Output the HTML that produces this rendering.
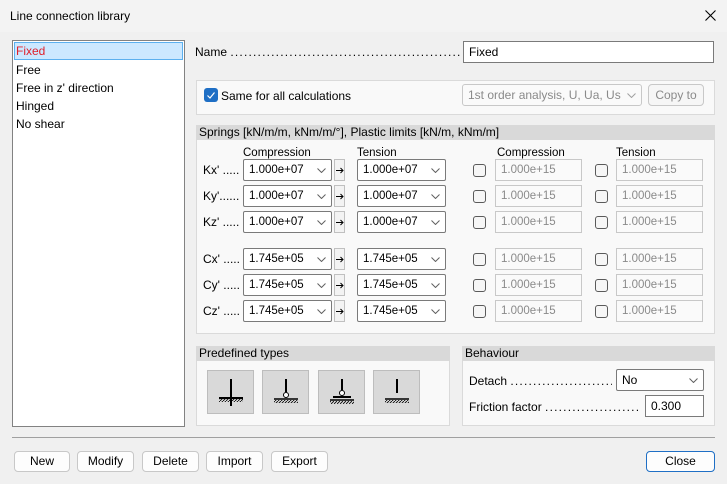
<!DOCTYPE html>
<html><head><meta charset="utf-8"><style>
*{box-sizing:border-box;margin:0;padding:0}
body{width:727px;height:484px;background:#f0f0f0;font-family:"Liberation Sans",sans-serif;font-size:12px;color:#000;position:relative;overflow:hidden}
.a{position:absolute}
.t{position:absolute;white-space:nowrap;line-height:14px}
.lbl{position:absolute;white-space:nowrap;overflow:hidden;line-height:14px}
.lbl span{letter-spacing:1.2px}
.in{position:absolute;background:#fff;border:1px solid #7a7a7a;height:22px;line-height:20px;padding-left:5px;white-space:nowrap}
.dis{position:absolute;background:#fafafa;border:1px solid #c8c8c8;color:#8a8a8a;height:22px;line-height:20px;padding-left:5px}
.chev{position:absolute;right:5px;top:8px}
.arr{position:absolute;width:11px;height:22px;border:1px solid #c0c0c0;background:#f3f3f3}
.arr svg{position:absolute;left:1px;top:7px}
.cb{position:absolute;width:13px;height:13px;border:1px solid #5a5a5a;border-radius:3px;background:#f6f6f6}
.btn{position:absolute;height:21px;border:1px solid #c8c8c8;border-radius:4px;background:#fdfdfd;text-align:center;line-height:19px}
.hdr{position:absolute;background:#d9d9d9;height:15px;line-height:14px;padding-left:3px}
.grp{position:absolute;background:#f9f9f9;border:1px solid #dadada}
.pb{position:absolute;width:47px;height:44px;background:#d9d9d9;border:1px solid #bdbdbd}
.sm{font-size:11.5px}
</style></head><body>
<svg width="0" height="0" style="position:absolute"><defs><pattern id="h" width="3" height="3" patternUnits="userSpaceOnUse"><path d="M0 3L3 0" stroke="#000" stroke-width="0.8"/></pattern></defs></svg>
<div class="a" style="left:0;top:0;width:727px;height:32px;background:#f3f3f3"></div>
<div class="t" style="left:10px;top:9px">Line connection library</div>
<svg class="a" style="left:705px;top:10px" width="11" height="11"><path d="M0.5 0.5L10.5 10.5M10.5 0.5L0.5 10.5" stroke="#000" stroke-width="1.1"/></svg>

<div class="a" style="left:12px;top:40px;width:173px;height:387px;background:#fff;border:1px solid #828282"></div>
<div class="a" style="left:14px;top:42px;width:169px;height:18px;background:#cce8ff;border:1px solid #5cb0ef"></div>
<div class="t" style="left:16px;top:44px;color:#e0202a">Fixed</div>
<div class="t" style="left:16px;top:63px">Free</div>
<div class="t" style="left:16px;top:81px">Free in z' direction</div>
<div class="t" style="left:16px;top:99px">Hinged</div>
<div class="t" style="left:16px;top:117px">No shear</div>

<div class="lbl" style="left:195px;top:45px;width:266px">Name <span>..........................................................................................</span></div>
<div class="in" style="left:463px;top:41px;width:251px;height:22px">Fixed</div>

<div class="grp" style="left:196px;top:80px;width:519px;height:35px"></div>
<div class="a" style="left:204px;top:88px;width:14px;height:14px;background:#1f6fc5;border-radius:3px"><svg width="14" height="14"><path d="M3.5 7.5L6 10L10.5 4.5" stroke="#fff" stroke-width="1.2" fill="none"/></svg></div>
<div class="t" style="left:221px;top:89px">Same for all calculations</div>
<div class="dis" style="left:462px;top:84px;width:180px;border-radius:3px">1st order analysis, U, Ua, Us<svg class="chev" width="9" height="5"><path d="M0.5 0.5L4.5 4.5L8.5 0.5" stroke="#a0a0a0" fill="none"/></svg></div>
<div class="btn" style="left:648px;top:84px;width:56px;height:22px;color:#8a8a8a;background:#f6f6f6;line-height:20px">Copy to</div>

<div class="grp" style="left:196px;top:125px;width:519px;height:209px"></div>
<div class="hdr" style="left:196px;top:125px;width:519px">Springs [kN/m/m, kNm/m/°], Plastic limits [kN/m, kNm/m]</div>
<div class="t sm" style="left:243px;top:146px">Compression</div>
<div class="t sm" style="left:357px;top:146px">Tension</div>
<div class="t sm" style="left:497px;top:146px">Compression</div>
<div class="t sm" style="left:616px;top:146px">Tension</div>

<div id="rows"></div>
<script>
var rows=[["Kx' .....",159,"1.000e+07"],["Ky'......",185,"1.000e+07"],["Kz' .....",211,"1.000e+07"],["Cx' .....",248,"1.745e+05"],["Cy' .....",274,"1.745e+05"],["Cz' .....",300,"1.745e+05"]];
var h="";
var ch='<svg class="chev" width="9" height="5"><path d="M0.5 0.5L4.5 4.5L8.5 0.5" stroke="#606060" fill="none"/></svg>';
var ar='<svg width="8" height="7"><path d="M0 3.5H7M4.5 1L7 3.5L4.5 6" stroke="#000" fill="none" stroke-width="1"/></svg>';
rows.forEach(function(r){var y=r[1];
h+='<div class="t" style="left:203px;top:'+(y+4)+'px">'+r[0]+'</div>';
h+='<div class="in sm" style="left:243px;top:'+y+'px;width:89px;border-radius:2px">'+r[2]+ch+'</div>';
h+='<div class="arr" style="left:334px;top:'+y+'px">'+ar+'</div>';
h+='<div class="in sm" style="left:357px;top:'+y+'px;width:89px;border-radius:2px">'+r[2]+ch+'</div>';
h+='<div class="cb" style="left:473px;top:'+(y+5)+'px"></div>';
h+='<div class="dis sm" style="left:495px;top:'+y+'px;width:87px">1.000e+15</div>';
h+='<div class="cb" style="left:595px;top:'+(y+5)+'px"></div>';
h+='<div class="dis sm" style="left:616px;top:'+y+'px;width:87px">1.000e+15</div>';
});
document.getElementById("rows").outerHTML=h;
</script>

<div class="grp" style="left:196px;top:346px;width:254px;height:80px"></div>
<div class="hdr" style="left:196px;top:346px;width:254px">Predefined types</div>
<div class="pb" style="left:207px;top:370px"><svg width="45" height="42"><path d="M23 8V35" stroke="#000" stroke-width="2"/><path d="M11 27H35" stroke="#000" stroke-width="2"/><rect x="11" y="28" width="24" height="3" fill="url(#h)"/></svg></div>
<div class="pb" style="left:262px;top:370px"><svg width="45" height="42"><path d="M23 8V21" stroke="#000" stroke-width="2"/><circle cx="23" cy="24" r="2.5" fill="#fff" stroke="#000"/><path d="M11 28H35" stroke="#000" stroke-width="1.5"/><rect x="11" y="29" width="24" height="3" fill="url(#h)"/></svg></div>
<div class="pb" style="left:318px;top:370px"><svg width="45" height="42"><path d="M23 8V19" stroke="#000" stroke-width="2"/><circle cx="23" cy="22" r="2.5" fill="#fff" stroke="#000"/><path d="M14 26H32" stroke="#000" stroke-width="2"/><path d="M11 29H35" stroke="#000" stroke-width="1.5"/><rect x="11" y="30" width="24" height="3" fill="url(#h)"/></svg></div>
<div class="pb" style="left:373px;top:370px"><svg width="45" height="42"><path d="M23 8V22" stroke="#000" stroke-width="2"/><path d="M11 28H35" stroke="#000" stroke-width="1.5"/><rect x="11" y="29" width="24" height="3" fill="url(#h)"/></svg></div>

<div class="grp" style="left:462px;top:346px;width:253px;height:80px"></div>
<div class="hdr" style="left:462px;top:346px;width:253px">Behaviour</div>
<div class="lbl" style="left:469px;top:374px;width:143px">Detach <span>.......................................................</span></div>
<div class="in" style="left:616px;top:369px;width:88px;border-radius:2px">No<svg class="chev" width="9" height="5"><path d="M0.5 0.5L4.5 4.5L8.5 0.5" stroke="#606060" fill="none"/></svg></div>
<div class="lbl" style="left:469px;top:400px;width:172px">Friction factor <span>..............................................</span></div>
<div class="in" style="left:645px;top:395px;width:59px">0.300</div>

<div class="a" style="left:12px;top:437px;width:703px;height:1px;background:#a0a0a0"></div>
<div class="btn" style="left:14px;top:451px;width:56px">New</div>
<div class="btn" style="left:77px;top:451px;width:57px">Modify</div>
<div class="btn" style="left:142px;top:451px;width:57px">Delete</div>
<div class="btn" style="left:206px;top:451px;width:57px">Import</div>
<div class="btn" style="left:271px;top:451px;width:57px">Export</div>
<div class="btn" style="left:646px;top:451px;width:69px;border:1px solid #1f6fc5">Close</div>
</body></html>
